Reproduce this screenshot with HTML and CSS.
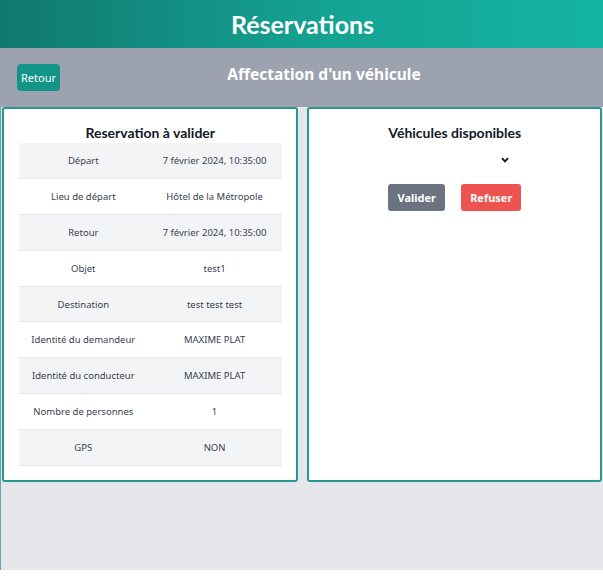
FILE: index.html
```html
<!DOCTYPE html>
<html lang="fr">
<head>
<meta charset="utf-8">
<title>Réservations</title>
<link rel="stylesheet" href="styles.css">
</head>
<body>
<header class="top">
  <h1 class="top-title">Réservations</h1>
</header>
<div class="subbar">
  <button class="btn-back">Retour</button>
  <h2 class="sub-title">Affectation d'un véhicule</h2>
</div>
<main class="main">
  <section class="card">
    <h3 class="card-title">Reservation à valider</h3>
    <table class="info">
      <tbody>
        <tr><td>Départ</td><td>7 février 2024, 10:35:00</td></tr>
        <tr><td>Lieu de départ</td><td>Hôtel de la Métropole</td></tr>
        <tr><td>Retour</td><td>7 février 2024, 10:35:00</td></tr>
        <tr><td>Objet</td><td>test1</td></tr>
        <tr><td>Destination</td><td>test test test</td></tr>
        <tr><td>Identité du demandeur</td><td>MAXIME PLAT</td></tr>
        <tr><td>Identité du conducteur</td><td>MAXIME PLAT</td></tr>
        <tr><td>Nombre de personnes</td><td>1</td></tr>
        <tr><td>GPS</td><td>NON</td></tr>
      </tbody>
    </table>
  </section>
  <section class="card">
    <h3 class="card-title">Véhicules disponibles</h3>
    <div class="select-row">
      <div class="select">
        <svg class="chev" width="8" height="6" viewBox="0 0 8 6"><path d="M1 1.2 L4 4.4 L7 1.2" fill="none" stroke="#111" stroke-width="1.8"/></svg>
      </div>
    </div>
    <div class="actions">
      <button class="btn btn-ok">Valider</button>
      <button class="btn btn-no">Refuser</button>
    </div>
  </section>
</main>
</body>
</html>
```
FILE: styles.css
```css
* { box-sizing: border-box; }
html, body { margin: 0; padding: 0; }
body {
  font-family: "Noto Sans", "Open Sans", sans-serif;
  background: #ffffff;
  width: 603px;
}
.top {
  height: 48px;
  background: linear-gradient(90deg, #107870 0%, #14a393 55%, #15b4a4 100%);
  display: flex;
  align-items: center;
  justify-content: center;
}
.top-title {
  margin: 0;
  color: #ffffff;
  font-family: Lato, "Noto Sans", sans-serif;
  font-size: 25px;
  font-weight: 700;
  line-height: 1;
  padding-left: 2px;
}
.subbar {
  height: 59px;
  background: #9ca3af;
  display: flex;
  align-items: flex-start;
  padding: 16px 0 0 17px;
}
.btn-back {
  width: 43px;
  height: 27px;
  border: none;
  border-radius: 4px;
  background: #129487;
  color: #ffffff;
  font-family: inherit;
  font-size: 11px;
  padding: 0;
}
.sub-title {
  margin: 0;
  flex: 1;
  text-align: center;
  color: #ffffff;
  font-size: 15.5px;
  font-weight: 700;
  line-height: 18px;
  padding-right: 15px;
  margin-top: 1px;
}
.main {
  height: 463px;
  background: #e5e7eb;
  border-left: 1px solid #6f9fab;
  padding: 0 1px 0 1px;
  display: grid;
  grid-template-columns: 1fr 1fr;
  column-gap: 9px;
  align-items: start;
}
.card {
  background: #ffffff;
  border: 2px solid #25998d;
  border-radius: 3px;
  height: 375px;
  padding: 14px 14px 0 15px;
}
.card-title {
  margin: 0;
  text-align: center;
  font-family: Lato, "Noto Sans", sans-serif;
  font-size: 14px;
  font-weight: 700;
  color: #111827;
  line-height: 20px;
}
.info {
  width: 100%;
  border-collapse: collapse;
  font-size: 9.5px;
  color: #374151;
}
.info td {
  text-align: center;
  height: 35.8px;
  padding: 0 6px;
  border-bottom: 1px solid #e5e7eb;
}
.info td:first-child { width: 49%; }
.info tr:nth-child(odd) td { background: #f3f4f6; }
.select-row {
  display: flex;
  justify-content: center;
  margin-top: 8px;
  height: 18px;
}
.select {
  width: 110px;
  display: flex;
  justify-content: flex-end;
  align-items: center;
  padding-right: 1px;
}
.actions {
  display: flex;
  justify-content: center;
  gap: 16px;
  margin-top: 15px;
}
.btn {
  height: 27px;
  border: none;
  border-radius: 3px;
  color: #ffffff;
  font-family: inherit;
  font-size: 11px;
  font-weight: 700;
  padding: 0;
}
.btn-ok { width: 57px; background: #6b7280; }
.btn-no { width: 60px; background: #ef5350; }
```
